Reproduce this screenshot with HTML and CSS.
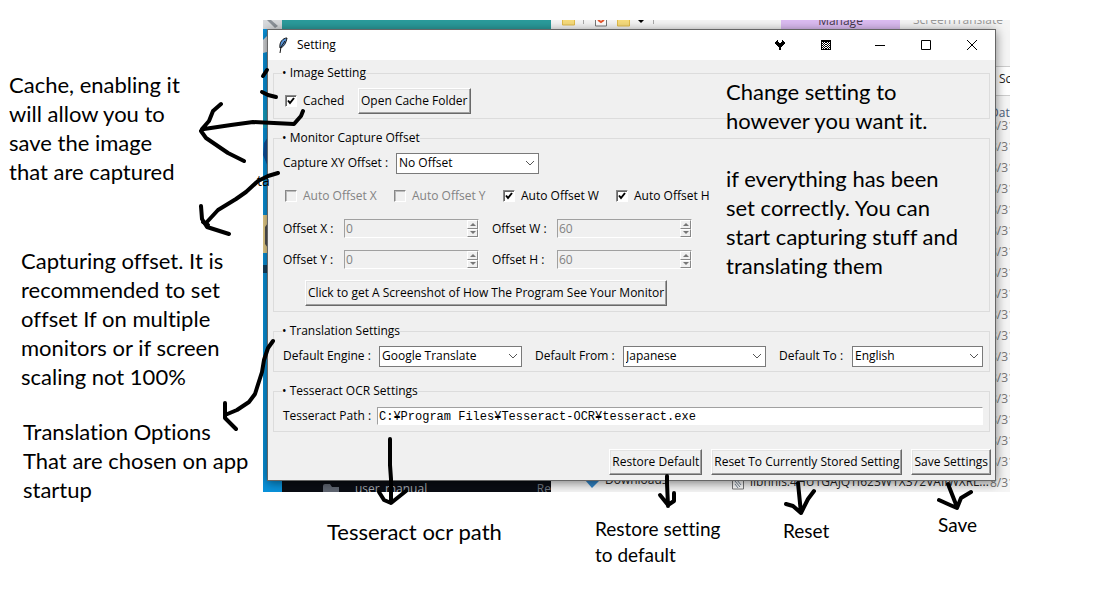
FILE: index.html
```html
<!DOCTYPE html>
<html lang="en">
<head>
<meta charset="utf-8">
<title>Setting</title>
<link rel="stylesheet" href="styles.css">
</head>
<body>
<main class="canvas">
  <div class="desktop">
    <div class="strip-top">
      <span class="corner"></span><span class="teal"></span>
      <svg class="quick" width="100" height="10" viewBox="0 0 100 10"><path fill="#f7dc7c" stroke="#e3bd4a" d="M5.500 -2h12v7h-12zM60.500 -2h12v8h-12z"/><path fill="#fff" stroke="#777" d="M38.500 -2h11v8h-11z"/><path fill="none" stroke="#e5562d" stroke-width="2" d="M41 0l3 2 3-2"/><path stroke="#aaa" d="M26.500 0v4M96.500 0v4"/><path d="M81 0h6l-3 3z"/></svg>
      <span class="manage">Manage</span><span class="apptitle">ScreenTranslate</span>
    </div>
    <div class="side-right">
      <span class="search">Sc</span><span class="date-head">Date</span>
      <ul class="dates"><li>8/31</li><li>8/31</li><li>8/31</li><li>8/31</li><li>8/31</li><li>8/31</li><li>8/31</li><li>8/31</li><li>8/31</li><li>8/31</li><li>8/31</li><li>8/31</li><li>8/31</li><li>8/31</li><li>8/31</li><li>8/31</li><li>8/31</li><li>8/31</li></ul>
    </div>
    <svg class="side-left" width="19" height="472" viewBox="0 0 19 472"><path fill="#0a93dc" d="M0 0h19v472H0z"/><path fill="#d8dadd" d="M0 0h19v9H0zM0 20l4-4v16l-4 1z"/><path fill="#8c9299" d="M4 0l8 8 3-2-7-6z"/><path fill="#17a3c4" d="M0 90h5v18H0z"/><path fill="#10529e" d="M5 117l-4 6-1 12 5 12z"/><path fill="#ecd38d" d="M0 195h5v38H0z"/><path fill="#555" d="M5 203l-3 4v17l3 4z"/><path fill="#14405f" d="M0 245h4v8H0z"/></svg>
    <div class="strip-bottom">
      <span class="repo"><svg width="16" height="12" viewBox="0 0 16 12"><path fill="#606672" d="M0 6q0-2 2-2h5l2 3h7v7H0z"/></svg><span>user_manual</span><span class="repo-end">Re</span></span>
      <span class="downloads"><svg width="16" height="12" viewBox="0 0 16 12"><path fill="#3186c9" d="M1 0h15L8 8z"/></svg><span>Downloads</span></span>
      <span class="file"><svg width="12" height="12" viewBox="0 0 12 12"><path fill="#fff" stroke="#777" d="M.5-1h11v10H.5z"/><path fill="none" stroke="#789" d="M3 1l5 6M5 0l4 5M3 4l3 4"/></svg><span>libnnls.4HU1GAJQTI623W1X372VAIIWXRL...</span></span>
    </div>

    <section class="window">
      <header class="titlebar">
        <svg width="12" height="18" viewBox="0 0 12 18"><path fill="#5793d6" stroke="#111" d="M10 2C6 2 2 6 3 12c4-1 6-5 7-10z"/><path fill="none" stroke="#111" d="M8 5L4 11l-1 6"/></svg>
        <h1>Setting</h1>
        <button aria-label="Pin"><svg width="10" height="10" viewBox="0 0 10 10"><path d="M2 0h1v2h1v1h2V2h1V0h1v1h1v1h1v2H9v1H8v1H7v1H6v3H4V7H3V6H2V5H1V4H0V2h1V1h1z"/></svg></button>
        <button class="gap" aria-label="Pattern"><svg width="10" height="10" viewBox="0 0 10 10"><path d="M0 0h10v10H0z"/><path fill="#fff" d="M1 2h1v1H1zM3 2h1v1H3zM6 2h1v1H6zM8 2h1v1H8zM2 3h1v1H2zM4 3h2v1H4zM7 3h1v1H7zM1 4h1v1H1zM3 4h1v1H3zM6 4h1v1H6zM8 4h1v1H8zM2 5h1v1H2zM4 5h2v1H4zM7 5h1v1H7zM1 6h1v1H1zM3 6h1v1H3zM6 6h1v1H6zM8 6h1v1H8zM2 7h1v1H2zM4 7h2v1H4zM7 7h1v1H7zM1 8h1v1H1zM3 8h1v1H3zM6 8h1v1H6zM8 8h1v1H8z"/></svg></button>
        <button aria-label="Minimize"><svg width="10" height="10" viewBox="0 0 10 10"><path stroke="#000" d="M0 5.500h10"/></svg></button>
        <button aria-label="Maximize"><svg width="10" height="10" viewBox="0 0 10 10"><path fill="none" stroke="#000" d="M.5.5h9v9h-9z"/></svg></button>
        <button aria-label="Close"><svg width="10" height="10" viewBox="0 0 10 10"><path stroke="#000" d="M0 0l10 10M10 0L0 10"/></svg></button>
      </header>
      <form class="form">
        <fieldset>
          <legend>• Image Setting</legend>
          <div class="row row-image">
            <label class="check"><input type="checkbox" checked>Cached</label>
            <button class="btn" type="button">Open Cache Folder</button>
          </div>
        </fieldset>
        <fieldset>
          <legend>• Monitor Capture Offset</legend>
          <div class="row row-capture">
            <label for="cap">Capture XY Offset :</label>
            <select id="cap"><option>No Offset</option></select>
          </div>
          <div class="row row-auto">
            <label class="check off"><input type="checkbox" disabled>Auto Offset X</label>
            <label class="check off"><input type="checkbox" disabled>Auto Offset Y</label>
            <label class="check"><input type="checkbox" checked>Auto Offset W</label>
            <label class="check"><input type="checkbox" checked>Auto Offset H</label>
          </div>
          <div class="row row-spin">
            <label for="ox">Offset X :</label>
            <span class="spin"><input id="ox" value="0" disabled><span class="steps"><button type="button" disabled aria-label="Up"></button><button type="button" disabled aria-label="Down"></button></span></span>
            <label for="ow">Offset W :</label>
            <span class="spin"><input id="ow" value="60" disabled><span class="steps"><button type="button" disabled aria-label="Up"></button><button type="button" disabled aria-label="Down"></button></span></span>
          </div>
          <div class="row row-spin">
            <label for="oy">Offset Y :</label>
            <span class="spin"><input id="oy" value="0" disabled><span class="steps"><button type="button" disabled aria-label="Up"></button><button type="button" disabled aria-label="Down"></button></span></span>
            <label for="oh">Offset H :</label>
            <span class="spin"><input id="oh" value="60" disabled><span class="steps"><button type="button" disabled aria-label="Up"></button><button type="button" disabled aria-label="Down"></button></span></span>
          </div>
          <div class="row row-shot">
            <button class="btn" type="button">Click to get A Screenshot of How The Program See Your Monitor</button>
          </div>
        </fieldset>
        <fieldset>
          <legend>• Translation Settings</legend>
          <div class="row row-lang">
            <label for="eng">Default Engine :</label>
            <select id="eng"><option>Google Translate</option></select>
            <label for="from">Default From :</label>
            <select id="from"><option>Japanese</option></select>
            <label for="to">Default To :</label>
            <select id="to"><option>English</option></select>
          </div>
        </fieldset>
        <fieldset>
          <legend>• Tesseract OCR Settings</legend>
          <div class="row row-path">
            <label for="path">Tesseract Path :</label>
            <input id="path" class="path" value="C:¥Program Files¥Tesseract-OCR¥tesseract.exe">
          </div>
        </fieldset>
        <footer class="actions">
          <button class="btn" type="button">Restore Default</button>
          <button class="btn" type="button">Reset To Currently Stored Setting</button>
          <button class="btn" type="button">Save Settings</button>
        </footer>
      </form>
    </section>
  </div>

  <p class="note n-cache">Cache, enabling it<br>will allow you to<br>save the image<br>that are captured</p>
  <p class="note n-offset">Capturing offset. It is<br>recommended to set<br>offset If on multiple<br>monitors or if screen<br>scaling not 100%</p>
  <p class="note n-trans">Translation Options<br>That are chosen on app<br>startup</p>
  <p class="note n-help">Change setting to<br>however you want it.<br><br>if everything has been<br>set correctly. You can<br>start capturing stuff and<br>translating them</p>
  <p class="note n-path">Tesseract ocr path</p>
  <p class="note small n-restore">Restore setting<br>to default</p>
  <p class="note small n-reset">Reset</p>
  <p class="note small n-save">Save</p>
  <span class="stray">ta</span>

  <svg class="ink" width="1102" height="593" viewBox="0 0 1102 593">
    <path d="M303 111l-2 5-7 8-41-2-22 3-27 4M221 104l-8 7-4 10-7 8M201 131l5 7 22 15 16 8"/>
    <path d="M262 92l6 3 8 2M263 76l4-6"/>
    <path d="M278 173l-10 3-10 5-12 11-10 7-18 11-12 13M201 206l1 13 5 8 22 7"/><path d="M203 222l5 3"/>
    <path d="M273 341l-5 7-4 12-2 12-7 22-6 8-12 8-12 5M225 403v15l11 11"/>
    <path d="M390 439v26l1 14v23M379 492l5 8 7 3 15-12"/>
    <path d="M667 476v7l1 23M660 495l8 10 6-4v-8"/>
    <path d="M798 483l3 30M786 504l7 2 8 7 7-14 6-8"/>
    <path d="M948 484l9 23M939 500l11 5 7 3 4-10 10-6"/>
  </svg>
</main>
</body>
</html>
```
FILE: styles.css
```css
* { box-sizing: border-box; }
body { margin: 0; background: #fff; color: #000; font: 12px/20px "Open Sans", "Noto Sans", sans-serif; }
button, input, select { font: inherit; color: inherit; margin: 0; }
p, h1, ul { margin: 0; padding: 0; }
svg { flex: none; }

.canvas { position: relative; min-height: 593px; overflow: hidden; }

/* desktop behind the dialog */
.desktop { position: absolute; left: 263px; top: 20px; width: 747px; height: 472px; overflow: hidden; background: #f5f5f5; }
.side-left { position: absolute; left: 0; top: 0; }
.strip-top { position: absolute; left: 0; right: 0; top: 0; height: 10px; display: flex; overflow: hidden; }
.corner { width: 18px; }
.teal { width: 270px; background: #2b9c9c; }
.quick { width: 100px; margin-left: 6px; margin-right: 124px; }
.manage { width: 119px; background: #dcbcf2; color: #443a4c; text-align: center; line-height: 2px; }
.apptitle { margin-left: 13px; color: #999; line-height: 0; white-space: nowrap; }
.side-right { position: absolute; right: 0; top: 0; width: 20px; display: flex; flex-direction: column; color: #777; white-space: nowrap; overflow: hidden; }
.search { margin-top: 46px; padding: 0 0 0 9px; height: 30px; line-height: 24px; border-top: 1px solid #ccc; border-bottom: 1px solid #ccc; color: #222; background: #fff; }
.date-head { margin-top: 7px; color: #4c607a; }
.dates { list-style: none; line-height: 21px; margin-top: -8px; }
.strip-bottom { position: absolute; left: 19px; right: 0; bottom: 0; height: 12px; display: flex; line-height: 18px; white-space: nowrap; }
.repo, .downloads, .file { height: 12px; display: flex; overflow: hidden; }
.repo { width: 269px; background: #0a0d14; color: #a8acb3; padding-left: 41px; gap: 16px; }
.repo-end { margin-left: auto; color: #707680; }
.downloads { width: 181px; gap: 5px; padding-left: 33px; line-height: 0; color: #222; }
.file { gap: 6px; line-height: 4px; color: #222; }

/* dialog */
.window { position: absolute; left: 4px; right: 14px; top: 9px; background: #f0f0f0; border: 1px solid #666; box-shadow: 0 2px 10px rgba(0, 0, 0, .5); }
.titlebar { display: flex; align-items: center; height: 30px; background: #fff; padding-left: 9px; }
.titlebar h1 { flex: 1; font-size: 12px; font-weight: 400; margin-left: 8px; }
.titlebar button { width: 46px; height: 30px; border: 0; padding: 0; background: none; display: grid; place-items: center; }
.titlebar .gap { margin-right: 8px; }
.form { padding: 3px 5px 5px; display: flex; flex-direction: column; gap: 9px; }
fieldset { margin: 0; min-width: 0; border: 1px solid #dcdcdc; padding: 0 6px 0 9px; }
legend { padding: 0; height: 20px; margin-left: -1px; }
.row { display: flex; align-items: center; height: 30px; white-space: nowrap; }
.row-image { height: 35px; padding-left: 2px; }
.row-image .check { width: 73px; }
.row-capture > label { width: 113px; }
.row-capture select { width: 143px; }
.row-auto { height: 35px; padding-left: 2px; }
.row-auto .check { width: 109px; }
.row-auto .check:nth-child(3) { width: 113px; }
.row-spin { height: 31px; }
.row-spin > label { width: 61px; }
.row-spin > label:nth-of-type(2) { width: 65px; }
.row-spin .spin:first-of-type { margin-right: 13px; }
.row-shot { height: 36px; padding-left: 22px; }
.row-lang { display: grid; grid-template-columns: 96px 143px 101px 143px 86px 1fr; }
.row-lang label:not(:first-child) { margin-left: 13px; }
.row-path > label { width: 94px; }

.check { display: flex; align-items: center; gap: 6px; }
.check input { appearance: none; width: 12px; height: 12px; background: #fff; border: 1px solid; border-color: #888 #fff #fff #888; box-shadow: inset 1px 1px #666; }
.check input:checked { background: #fff url("data:image/svg+xml,%3Csvg xmlns='http://www.w3.org/2000/svg' width='10' height='10'%3E%3Cpath fill='none' stroke='%23000' stroke-width='2' d='M2 4.500l2 2.500 4-5'/%3E%3C/svg%3E") center no-repeat; }
.check input:disabled { background: #f0f0f0; box-shadow: inset 1px 1px #bbb; }
.off { color: #838383; }

.btn { height: 26px; padding: 0 2px; line-height: 20px; background: #f0f0f0; border: 1px solid; border-color: #fff #696969 #696969 #fff; box-shadow: inset -1px -1px #a0a0a0, inset 1px 1px #e3e3e3; white-space: nowrap; }

select { appearance: none; height: 21px; line-height: 18px; padding: 0 20px 0 2px; border: 1px solid #7a7a7a; border-radius: 0; min-width: 0; background: #fff url("data:image/svg+xml,%3Csvg xmlns='http://www.w3.org/2000/svg' width='10' height='6'%3E%3Cpath fill='none' stroke='%23555' d='M1 1l4 4 4-4'/%3E%3C/svg%3E") right 3px center no-repeat; }

.spin { display: flex; width: 135px; height: 19px; border: 1px solid; border-color: #a0a0a0 #fff #fff #a0a0a0; }
.spin input { flex: 1; min-width: 0; padding: 0 1px; border: 0; background: none; color: #838383; }
.steps { display: flex; flex-direction: column; width: 11px; }
.steps button { flex: 1; min-height: 0; padding: 0; display: grid; place-items: center; background: #f0f0f0; border: 1px solid; border-color: #fff #888 #888 #fff; }
.steps button::before { content: ""; border: 3px solid transparent; border-top: 0; border-bottom-color: #777; }
.steps button + button::before { border: 3px solid transparent; border-bottom: 0; border-top-color: #777; }
.path { flex: 1; min-width: 0; height: 18px; padding: 1px 1px 0; border: 1px solid; border-color: #a0a0a0 #fff #fff #a0a0a0; font: 12px "Liberation Mono", monospace; }
.actions { display: flex; justify-content: flex-end; gap: 9px; margin-top: 8px; margin-right: -1px; }

/* annotations */
.note { position: absolute; font: 22px/29px Lato, sans-serif; font-variant-ligatures: none; white-space: nowrap; }
.small { font-size: 19px; line-height: 26px; }
.n-cache { left: 9px; top: 70px; }
.n-offset { left: 21px; top: 246px; }
.n-trans { left: 23px; top: 417px; }
.n-help { left: 726px; top: 77px; }
.n-path { left: 327px; top: 517px; }
.n-restore { left: 595px; top: 516px; }
.n-reset { left: 783px; top: 518px; }
.n-save { left: 938px; top: 512px; }
.stray { position: absolute; left: 257px; top: 171px; font-size: 14px; }
.ink { position: absolute; left: 0; top: 0; fill: none; stroke: #000; stroke-width: 4; stroke-linecap: round; stroke-linejoin: round; pointer-events: none; }
```
